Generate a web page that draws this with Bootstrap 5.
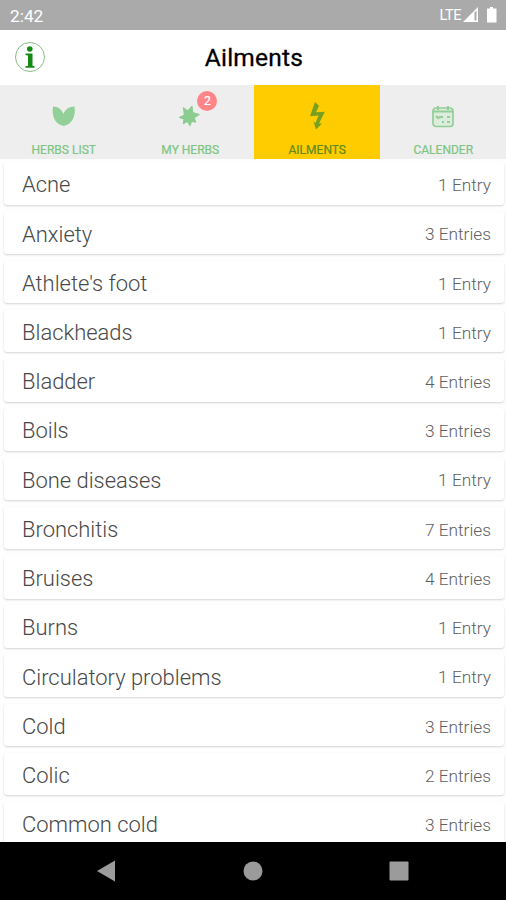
<!DOCTYPE html>
<html lang="en">
<head>
<meta charset="utf-8">
<meta name="viewport" content="width=device-width, initial-scale=1">
<title>Ailments</title>
<link href="https://cdn.jsdelivr.net/npm/bootstrap@5.3.0/dist/css/bootstrap.min.css" rel="stylesheet">
<style>
body{font-family:Roboto,sans-serif;height:900px;line-height:1.2}
.status-bar{height:30px;background:#aaa;color:#fff;font-size:17.3px;padding:2px 8px 0 10px}
.lte{font-size:14.5px;letter-spacing:-.4px;margin-right:-1px;padding-bottom:1px}
.title-bar{height:55px;padding:0 14px;display:grid;grid-template-columns:32px 1fr 32px}
.title-bar h1{font-size:24.5px;font-weight:400;letter-spacing:.25px;color:#000;-webkit-text-stroke:.3px #000;padding:1px 0 0 2px}
.tabs{height:74px;background:#eee}
.tab-item{font-size:12px;font-weight:400;color:#7cc582;-webkit-text-stroke:.2px;padding:17px 0 2px 1px;text-decoration:none}
.tab-item.current{background:#fc0;color:#5e8a1c;margin-left:.5px;margin-right:-.5px}
.tab-item svg{display:block}
.count{width:20px;height:20px;left:20px;top:-11px;background:#ff8589;font-size:12px;font-weight:400}
.entries{padding:3.3px 2px 0 4px;gap:6.73px;background:#fefefe}
.entry{height:42.5px;padding:4px 13px 0 18px;border-radius:3px;background:#fff;box-shadow:0 1px 2px rgba(0,0,0,.17);font-weight:300;color:#484848;font-size:21.95px}
.entry small{font-size:17.3px;color:#606060}
.system-nav{height:58px;background:#000;padding:0 97px 0 96px}
</style>
</head>
<body class="d-flex flex-column overflow-hidden bg-white">
<header class="status-bar d-flex align-items-center flex-shrink-0">
  <span class="me-auto">2:42</span><span class="lte">LTE</span>
  <svg width="38" height="20" viewBox="-2 1 38 20"><path d="M1 17 16 2v15z" fill="#fff"/><path d="M12.500 7.500 14.500 5.500v10h-2z" fill="#aaa"/><path d="M25 3.500h3V2h3v1.500h3.500v14H25z" fill="#fff"/></svg>
</header>
<div class="title-bar align-items-center flex-shrink-0">
  <svg width="32" height="32" viewBox="0 0 32 32"><circle cx="16" cy="15" r="14.500" fill="none" stroke="#87bd87"/><circle cx="15.800" cy="7" r="2.800" fill="#148a14"/><path d="M11.500 11.500h7v12.300l2 .500v1.500h-9v-1.500l2.500-.500V13.500l-2.500-.500z" fill="#148a14"/></svg>
  <h1 class="text-center m-0">Ailments</h1>
</div>
<nav class="tabs d-flex flex-shrink-0">
  <a class="tab-item col-3 d-flex flex-column align-items-center justify-content-between">
    <svg width="26" height="28" viewBox="0 0 26 28"><path d="M2 4.500c5 0 9 3 10.500 7.500C14 7.500 18 4.500 23.500 4.500c1.500 9-2 18-10.800 19.500C4 22.500.500 14 2 4.500z" fill="#93d098"/></svg>
    <span>HERBS LIST</span></a>
  <a class="tab-item col-3 d-flex flex-column align-items-center justify-content-between">
    <span class="position-relative"><svg width="26" height="28" viewBox="0 0 26 28"><path d="m6.500 6 4.300 3.200L15 4.500l.500 6 6.500 2-5 3.200 1.500 4.300-4-1-1.500 4.500-2.500-4.300-4 2.300.500-4.500-4.500-1.500 5-2.500z" fill="#8bcc91" stroke="#8bcc91" stroke-width="1.300" stroke-linejoin="round"/></svg><span class="count position-absolute rounded-circle text-white d-flex align-items-center justify-content-center">2</span></span>
    <span>MY HERBS</span></a>
  <a class="tab-item current col-3 d-flex flex-column align-items-center justify-content-between">
    <svg width="26" height="28" viewBox="0 0 26 28"><path d="M11 0 6 14.300l8.500-.800-3 7.500-2-1.500 2.500 8 6-6h-3l5.800-11.800-8.800.600 3-6.600z" fill="#779f20"/></svg>
    <span>AILMENTS</span></a>
  <a class="tab-item col-3 d-flex flex-column align-items-center justify-content-between">
    <svg width="26" height="28" viewBox="0 0 26 28"><rect x="3" y="6" width="20" height="18.500" rx="3" fill="#dcecdd" stroke="#92ce98" stroke-width="1.700"/><path d="M3 9.500h20M8 4v4M18 4v4" stroke="#92ce98" stroke-width="2"/><path d="m6 14 2 2 2-1h3M17 15h3M12 20h2M17 20h3" fill="none" stroke="#92ce98" stroke-width="2"/></svg>
    <span>CALENDER</span></a>
</nav>
<main class="entries d-flex flex-column flex-fill overflow-hidden">
  <div class="entry d-flex align-items-center justify-content-between flex-shrink-0"><span>Acne</span><small>1 Entry</small></div>
  <div class="entry d-flex align-items-center justify-content-between flex-shrink-0"><span>Anxiety</span><small>3 Entries</small></div>
  <div class="entry d-flex align-items-center justify-content-between flex-shrink-0"><span>Athlete's foot</span><small>1 Entry</small></div>
  <div class="entry d-flex align-items-center justify-content-between flex-shrink-0"><span>Blackheads</span><small>1 Entry</small></div>
  <div class="entry d-flex align-items-center justify-content-between flex-shrink-0"><span>Bladder</span><small>4 Entries</small></div>
  <div class="entry d-flex align-items-center justify-content-between flex-shrink-0"><span>Boils</span><small>3 Entries</small></div>
  <div class="entry d-flex align-items-center justify-content-between flex-shrink-0"><span>Bone diseases</span><small>1 Entry</small></div>
  <div class="entry d-flex align-items-center justify-content-between flex-shrink-0"><span>Bronchitis</span><small>7 Entries</small></div>
  <div class="entry d-flex align-items-center justify-content-between flex-shrink-0"><span>Bruises</span><small>4 Entries</small></div>
  <div class="entry d-flex align-items-center justify-content-between flex-shrink-0"><span>Burns</span><small>1 Entry</small></div>
  <div class="entry d-flex align-items-center justify-content-between flex-shrink-0"><span>Circulatory problems</span><small>1 Entry</small></div>
  <div class="entry d-flex align-items-center justify-content-between flex-shrink-0"><span>Cold</span><small>3 Entries</small></div>
  <div class="entry d-flex align-items-center justify-content-between flex-shrink-0"><span>Colic</span><small>2 Entries</small></div>
  <div class="entry d-flex align-items-center justify-content-between flex-shrink-0"><span>Common cold</span><small>3 Entries</small></div>
</main>
<footer class="system-nav d-flex align-items-center justify-content-between flex-shrink-0">
  <svg width="20" height="22" viewBox="0 0 20 22"><path d="M1 11 19 .5v21z" fill="#9b9b9b"/></svg>
  <svg width="20" height="20" viewBox="0 0 20 20"><circle cx="10" cy="10" r="9.500" fill="#9b9b9b"/></svg>
  <svg width="20" height="20" viewBox="0 0 20 20"><rect x=".5" y=".5" width="19" height="19" rx="1" fill="#9b9b9b"/></svg>
</footer>
<script src="https://cdn.jsdelivr.net/npm/bootstrap@5.3.0/dist/js/bootstrap.bundle.min.js"></script>
</body>
</html>
